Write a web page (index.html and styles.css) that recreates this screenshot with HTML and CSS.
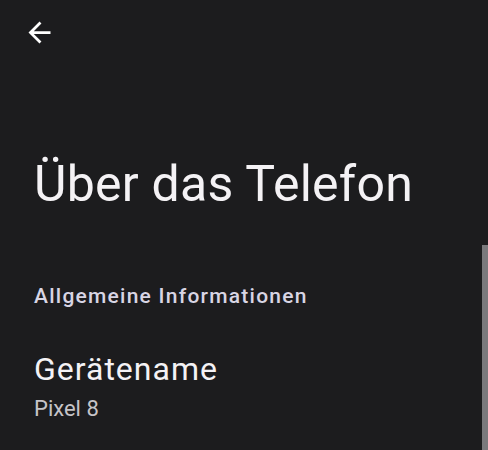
FILE: index.html
```html
<!DOCTYPE html>
<html lang="de">
<head>
<meta charset="utf-8">
<link rel="stylesheet" href="styles.css">
</head>
<body>
<div class="screen">
  <div class="topbar">
    <svg class="back" viewBox="0 0 24 24" width="33" height="33"><path fill="#ffffff" d="M20 11H7.83l5.59-5.59L12 4l-8 8 8 8 1.41-1.41L7.83 13H20v-2z"/></svg>
  </div>
  <h1 class="title">Über das Telefon</h1>
  <div class="section">Allgemeine Informationen</div>
  <div class="item">
    <div class="item-title">Gerätename</div>
    <div class="item-sub">Pixel 8</div>
  </div>
  <div class="scrollbar"></div>
</div>
</body>
</html>
```
FILE: styles.css
```css
html, body {
  margin: 0;
  padding: 0;
  background: #1c1c1e;
}
.screen {
  position: relative;
  width: 488px;
  height: 450px;
  overflow: hidden;
  background: #1c1c1e;
  font-family: Roboto, "Noto Sans", sans-serif;
  color: #f3f1f4;
}
.topbar {
  height: 66px;
  padding-left: 23px;
  padding-top: 16px;
  box-sizing: border-box;
}
.back { display: block; }
.title {
  margin: 0;
  padding: 86px 0 0 34px;
  font-weight: 400;
  font-size: 50px;
  line-height: 64px;
  letter-spacing: 0.25px;
  color: #f4f2f5;
}
.section {
  padding: 68px 0 0 34px;
  font-size: 21px;
  font-weight: 500;
  line-height: 24px;
  letter-spacing: 1.25px;
  color: #d8d5e4;
}
.item {
  padding: 41px 0 0 34px;
}
.item-title {
  font-size: 32px;
  line-height: 40px;
  letter-spacing: 1px;
  color: #f4f2f5;
}
.item-sub {
  margin-top: 6px;
  font-size: 22px;
  line-height: 28px;
  color: #c6c4c8;
}
.scrollbar {
  position: absolute;
  right: 0;
  top: 245px;
  width: 6px;
  height: 205px;
  background: #7a797c;
}
```
